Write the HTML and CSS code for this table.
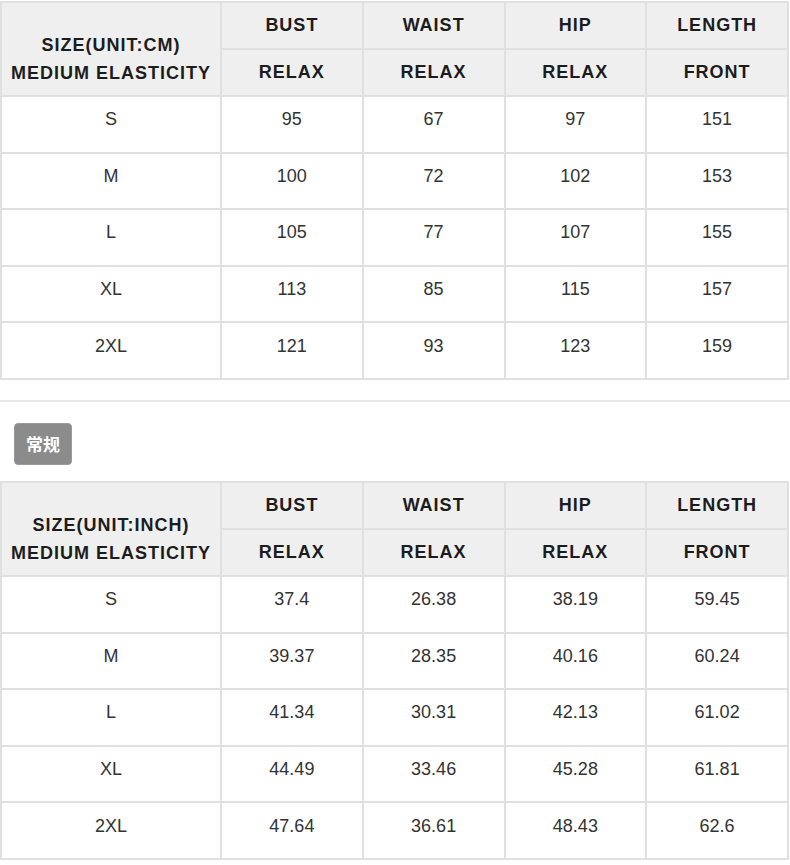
FILE: index.html
```html
<!DOCTYPE html>
<html lang="en">
<head>
<meta charset="utf-8">
<title>Size chart</title>
<link rel="stylesheet" href="styles.css">
</head>
<body>
<div class="section">
  <table class="chart">
    <colgroup><col class="c-size"><col class="c-val"><col class="c-val"><col class="c-val"><col class="c-val"></colgroup>
    <thead>
      <tr class="hrow"><th rowspan="2" class="size-head">SIZE(UNIT:CM)<br>MEDIUM ELASTICITY</th><th>BUST</th><th>WAIST</th><th>HIP</th><th>LENGTH</th></tr>
      <tr class="hrow"><th>RELAX</th><th>RELAX</th><th>RELAX</th><th>FRONT</th></tr>
    </thead>
    <tbody>
      <tr><td>S</td><td>95</td><td>67</td><td>97</td><td>151</td></tr>
      <tr><td>M</td><td>100</td><td>72</td><td>102</td><td>153</td></tr>
      <tr><td>L</td><td>105</td><td>77</td><td>107</td><td>155</td></tr>
      <tr><td>XL</td><td>113</td><td>85</td><td>115</td><td>157</td></tr>
      <tr><td>2XL</td><td>121</td><td>93</td><td>123</td><td>159</td></tr>
    </tbody>
  </table>
</div>
<div class="tag-wrap"><span class="tag">常规</span></div>
<table class="chart">
  <colgroup><col class="c-size"><col class="c-val"><col class="c-val"><col class="c-val"><col class="c-val"></colgroup>
  <thead>
    <tr class="hrow"><th rowspan="2" class="size-head">SIZE(UNIT:INCH)<br>MEDIUM ELASTICITY</th><th>BUST</th><th>WAIST</th><th>HIP</th><th>LENGTH</th></tr>
    <tr class="hrow"><th>RELAX</th><th>RELAX</th><th>RELAX</th><th>FRONT</th></tr>
  </thead>
  <tbody>
    <tr><td>S</td><td>37.4</td><td>26.38</td><td>38.19</td><td>59.45</td></tr>
    <tr><td>M</td><td>39.37</td><td>28.35</td><td>40.16</td><td>60.24</td></tr>
    <tr><td>L</td><td>41.34</td><td>30.31</td><td>42.13</td><td>61.02</td></tr>
    <tr><td>XL</td><td>44.49</td><td>33.46</td><td>45.28</td><td>61.81</td></tr>
    <tr><td>2XL</td><td>47.64</td><td>36.61</td><td>48.43</td><td>62.6</td></tr>
  </tbody>
</table>
</body>
</html>
```
FILE: styles.css
```css
html, body {
  margin: 0;
  padding: 0;
  background: #ffffff;
}
body {
  font-family: "Liberation Sans", Arial, sans-serif;
  color: #333333;
}
.section {
  padding-top: 1px;
  padding-bottom: 20px;
  border-bottom: 2px solid #e8e8e8;
}
.chart {
  width: 787px;
  border-collapse: collapse;
  table-layout: fixed;
  border: 2px solid #e0e0e0;
}
.c-size { width: 220px; }
.c-val { width: 141.75px; }
.chart th,
.chart td {
  border: 2px solid #e0e0e0;
  text-align: center;
  vertical-align: middle;
  padding: 0;
}
.chart th {
  background: #efefef;
  color: #1c1c1c;
  font-size: 18px;
  font-weight: bold;
  letter-spacing: 1px;
  height: 45px;
}
.chart th.size-head {
  line-height: 28px;
  padding-top: 20px;
}
.chart td {
  height: 44.6px;
  padding-bottom: 10px;
  font-size: 18px;
  line-height: 20px;
  color: #333333;
}
.tag-wrap {
  display: flex;
  padding: 21px 0 16px 14px;
}
.tag {
  display: flex;
  align-items: center;
  justify-content: center;
  width: 58px;
  height: 42px;
  box-sizing: border-box;
  border: 1px solid #9a9a9a;
  border-radius: 4px;
  background: #8b8b8b;
  color: #ffffff;
  font-family: "Noto Sans CJK SC", sans-serif;
  font-weight: bold;
  font-size: 17px;
  line-height: 1;
}
```
